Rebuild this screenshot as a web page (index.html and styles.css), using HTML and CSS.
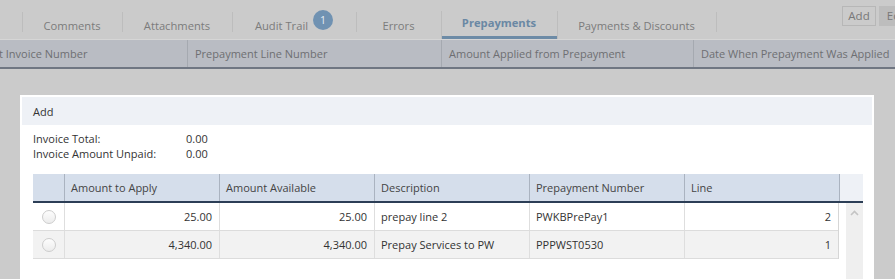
FILE: index.html
```html
<!DOCTYPE html>
<html>
<head>
<meta charset="utf-8">
<link rel="stylesheet" href="styles.css">
</head>
<body>
<div class="page">
  <div class="tabbar">
    <div class="tab tab-first"></div>
    <div class="tab w100">Comments</div>
    <div class="tab w110">Attachments</div>
    <div class="tab w124">Audit Trail <span class="badge">1</span></div>
    <div class="tab w85">Errors</div>
    <div class="tab w116 active">Prepayments</div>
    <div class="tab w159">Payments &amp; Discounts</div>
    <div class="tab tab-last"></div>
    <div class="actions">
      <span class="btn">Add</span>
      <span class="btn btn-dark">Edit</span>
    </div>
  </div>
  <div class="bgheader">
    <div class="bgcol c186"><span class="clipped">t Invoice Number</span></div>
    <div class="bgcol c254">Prepayment Line Number</div>
    <div class="bgcol c252">Amount Applied from Prepayment</div>
    <div class="bgcol cfill">Date When Prepayment Was Applied</div>
  </div>

  <div class="dialog">
    <div class="dlg-head">Add</div>
    <div class="dlg-body">
      <div class="summary">
        <div class="sum-row"><span class="sum-label">Invoice Total:</span><span>0.00</span></div>
        <div class="sum-row"><span class="sum-label">Invoice Amount Unpaid:</span><span>0.00</span></div>
      </div>
      <div class="grid">
        <div class="grid-head">
          <div class="hcell sel"></div>
          <div class="hcell">Amount to Apply</div>
          <div class="hcell">Amount Available</div>
          <div class="hcell">Description</div>
          <div class="hcell">Prepayment Number</div>
          <div class="hcell">Line</div>
          <div class="hcell scrollhead"></div>
        </div>
        <div class="grid-bodywrap">
          <div class="grid-body">
            <div class="row">
              <div class="cell sel"><span class="radio"></span></div>
              <div class="cell num">25.00</div>
              <div class="cell num">25.00</div>
              <div class="cell">prepay line 2</div>
              <div class="cell">PWKBPrePay1</div>
              <div class="cell num">2</div>
            </div>
            <div class="row alt">
              <div class="cell sel"><span class="radio"></span></div>
              <div class="cell num">4,340.00</div>
              <div class="cell num">4,340.00</div>
              <div class="cell">Prepay Services to PW</div>
              <div class="cell">PPPWST0530</div>
              <div class="cell num">1</div>
            </div>
          </div>
          <div class="scrollbar">
            <svg width="9" height="6" viewBox="0 0 9 6"><path d="M1 5 L4.5 1.5 L8 5" fill="none" stroke="#c4c4c4" stroke-width="1.6"/></svg>
          </div>
        </div>
      </div>
    </div>
  </div>
</div>
</body>
</html>
```
FILE: styles.css
```css
* { box-sizing: border-box; }
html, body { margin: 0; padding: 0; }
body {
  background: #cbcbcb;
  font-family: "Open Sans", "Liberation Sans", sans-serif;
  font-size: 11px;
  overflow: hidden;
  width: 895px;
  height: 279px;
}
.page { width: 895px; height: 279px; overflow: hidden; }

.tabbar {
  display: flex;
  height: 40px;
  border-bottom: 1px solid #d6d6d6;
}
.tab {
  height: 39px;
  display: flex;
  align-items: center;
  justify-content: center;
  color: #7b7b7b;
  font-size: 11.2px;
  padding-top: 12px;
  position: relative;
  flex: none;
  white-space: nowrap;
}
.tab::before {
  content: "";
  position: absolute;
  left: 0;
  top: 12px;
  height: 20px;
  border-left: 1px solid #bdbdbd;
}
.tab-first { width: 22px; }
.tab-first::before { display: none; }
.w100 { width: 100px; }
.w110 { width: 110px; }
.w124 { width: 124px; }
.w85 { width: 85px; }
.w116 { width: 116px; }
.w159 { width: 159px; }
.tab-last { width: 1px; }
.tab.active {
  color: #6a88a4;
  font-weight: 700;
  padding-top: 9px;
  border-bottom: 3px solid #6d8ba6;
}
.tab.active::before { top: 11px; height: 28px; }
.tab.active + .tab::before { top: 11px; height: 28px; }
.badge {
  display: inline-flex;
  align-items: center;
  justify-content: center;
  width: 20px;
  height: 20px;
  border-radius: 50%;
  background: #7092b2;
  color: #e8eef4;
  font-size: 10.5px;
  margin-left: 5px;
  margin-top: -12px;
}
.actions {
  flex: none;
  display: flex;
  gap: 3px;
  margin-left: 125px;
  padding-top: 6px;
}
.btn {
  height: 20px;
  border: 1px solid #b7b7b7;
  color: #787878;
  font-size: 11.5px;
  line-height: 18px;
  text-align: center;
  width: 34px;
}
.btn-dark { background: #bdbdbd; border-color: #bdbdbd; width: 36px; }

.bgheader {
  display: flex;
  height: 29px;
  background: #b9bcc3;
  border-bottom: 2px solid #6f7682;
  color: #6e6f72;
}
.bgcol {
  display: flex;
  align-items: center;
  padding-left: 7px;
  white-space: nowrap;
  overflow: hidden;
  border-left: 1px solid #a5a9b0;
  flex: none;
}
.c186 { width: 187px; border-left: none; padding-left: 0; }
.clipped { margin-left: -1px; }
.c254 { width: 254px; }
.c252 { width: 252px; }
.cfill { flex: 1; }

.dialog {
  margin: 26px 0 0 20px;
  width: 854px;
  height: 200px;
  background: #fff;
  padding: 2px;
}
.dlg-head {
  height: 28px;
  background: #eef1f6;
  color: #333;
  display: flex;
  align-items: center;
  padding-left: 11px;
}
.dlg-body { padding: 6px 0 0 11px; color: #333; }
.summary { display: flex; flex-direction: column; }
.sum-row { display: flex; height: 15px; line-height: 15px; }
.sum-label { width: 153px; }

.grid { margin-top: 13px; width: 830px; }
.grid-head {
  display: flex;
  height: 29px;
  border-bottom: 2px solid #2c3e56;
  background: #d5deeb;
}
.hcell {
  width: 155px;
  flex: none;
  border-left: 1px solid #aab3c0;
  display: flex;
  align-items: center;
  padding-left: 6px;
  color: #444;
  white-space: nowrap;
}
.hcell.sel { width: 31px; border-left: none; }
.hcell.scrollhead { width: 24px; background: #eef1f6; }
.grid-bodywrap { display: flex; }
.grid-body { width: 806px; border-right: 1px solid #d6d6d6; align-self: flex-start; }
.row { display: flex; height: 28px; border-bottom: 1px solid #dcdcdc; background: #fff; }
.row.alt { background: #f2f2f2; }
.cell {
  width: 155px;
  flex: none;
  border-left: 1px solid #dedede;
  display: flex;
  align-items: center;
  padding: 0 6px;
  color: #333;
  white-space: nowrap;
}
.cell.num { justify-content: flex-end; padding-right: 7px; }
.cell.sel { width: 31px; border-left: none; justify-content: center; padding: 0; }
.row .cell:last-child { width: 154px; }
.radio {
  width: 14px;
  height: 14px;
  border-radius: 50%;
  border: 1px solid #cdcdcd;
  background: linear-gradient(#fdfdfd, #ececec);
}
.scrollbar {
  margin-left: 7px;
  width: 17px;
  height: 80px;
  background: #efefef;
  display: flex;
  justify-content: center;
  padding-top: 7px;
}
.scrollbar svg { display: block; }
```
